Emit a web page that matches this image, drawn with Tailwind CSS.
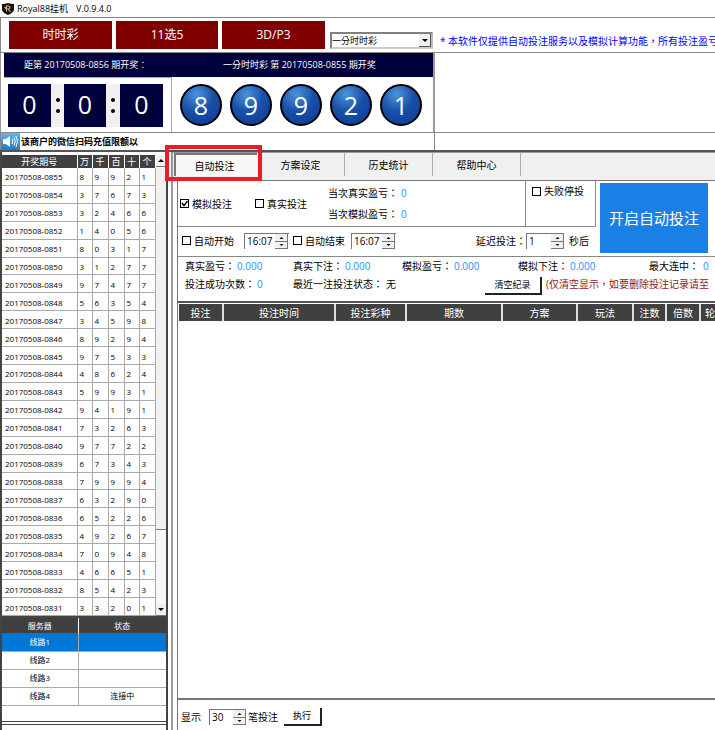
<!DOCTYPE html>
<html lang="zh-Hant">
<head>
<meta charset="utf-8">
<title>Royal88挂机 V.0.9.4.0</title>
<script src="https://cdn.jsdelivr.net/npm/@tailwindcss/browser@4"></script>
</head>
<body class="bg-white text-black font-['Open_Sans','Noto_Sans_CJK_TC',sans-serif] text-[10px] leading-[14px] overflow-hidden">
<div class="flex flex-col h-screen min-w-0 overflow-hidden whitespace-nowrap">
  <header class="flex items-center h-[17px] shrink-0 pl-[2px] gap-[3px]">
    <svg class="size-[12px]" viewBox="0 0 12 12"><path d="M0 1Q3 1 6 0Q9 1 12 1V7Q11 10 6 12Q1 10 0 7Z" fill="#15130f"/><path d="M4.500 8.500V3H6.500Q8 3.200 8 4.500Q8 6 6 6L8.500 9M2.500 4L4.500 6" fill="none" stroke="#d8b978" stroke-width="1.100"/></svg>
    <h1 class="flex gap-2 text-[9px]"><span>Royal88挂机</span><span>V.0.9.4.0</span></h1>
  </header>

  <div class="flex h-[36px] shrink-0 border-t border-l border-[#888] pl-2 pt-[3px] border-b">
    <nav class="flex gap-1 text-[12px] text-white">
      <button class="w-[103px] h-[28px] bg-[#800000]">时时彩</button>
      <button class="w-[102px] h-[28px] bg-[#800000]">11选5</button>
      <button class="w-[103px] h-[28px] bg-[#800000]">3D/P3</button>
    </nav>
    <div class="relative ml-[5px] mt-[11px] w-[103px] h-[17px] shrink-0 border-2 border-[#808080] border-r-[#bbb] border-b-[#ccc]">
      <select aria-label="彩种" class="block appearance-none w-full h-full text-[9px] leading-[12px] bg-white"><option>一分时时彩</option></select>
      <span class="absolute right-0 top-0 w-[12px] h-[13px] bg-[#f0f0f0] border-r border-b border-[#555] flex items-center justify-center pointer-events-none"><svg width="6" height="3"><path d="M0 0H6L3 3Z"/></svg></span>
    </div>
    <p class="ml-[7px] mt-[13px] text-[#0000ff] leading-[15px]">* 本软件仅提供自动投注服务以及模拟计算功能，所有投注盈亏</p>
  </div>

  <div class="flex h-[80px] shrink-0 border-b border-[#888]">
    <section class="w-[435px] shrink-0 border-l border-r-2 border-[#999] pl-[3px]">
      <div class="flex items-center h-[24px] bg-[#00003c] text-white text-[9px] pl-[20px]">
        <span class="w-[199px]">距第 20170508-0856 期开奖：</span><span>一分时时彩 第 20170508-0855 期开奖</span>
      </div>
      <div class="flex h-[55px]">
        <div class="flex items-center pl-1 pr-2 border-r border-t border-[#aaa] w-[168px] text-[25px] leading-[41px] text-white text-center">
          <span class="w-[43px] h-[43px] bg-[#00003c]">0</span>
          <span class="w-[13px] h-[43px] bg-[#f0f0f0] text-black flex flex-col items-center justify-center gap-[7px]"><i class="size-1 rounded-full bg-black"></i><i class="size-1 rounded-full bg-black"></i></span>
          <span class="w-[42px] h-[43px] bg-[#00003c]">0</span>
          <span class="w-[14px] h-[43px] bg-[#f0f0f0] text-black flex flex-col items-center justify-center gap-[7px]"><i class="size-1 rounded-full bg-black"></i><i class="size-1 rounded-full bg-black"></i></span>
          <span class="w-[43px] h-[43px] bg-[#00003c]">0</span>
        </div>
        <div class="flex flex-1 items-center gap-2 pl-2 text-[25px] leading-[38px] text-white text-center">
          <span class="size-[42px] rounded-full border-2 border-black bg-[radial-gradient(circle_at_38%_22%,#4a94dc,#1a50a8_45%,#0c3894)]">8</span>
          <span class="size-[42px] rounded-full border-2 border-black bg-[radial-gradient(circle_at_38%_22%,#4a94dc,#1a50a8_45%,#0c3894)]">9</span>
          <span class="size-[42px] rounded-full border-2 border-black bg-[radial-gradient(circle_at_38%_22%,#4a94dc,#1a50a8_45%,#0c3894)]">9</span>
          <span class="size-[42px] rounded-full border-2 border-black bg-[radial-gradient(circle_at_38%_22%,#4a94dc,#1a50a8_45%,#0c3894)]">2</span>
          <span class="size-[42px] rounded-full border-2 border-black bg-[radial-gradient(circle_at_38%_22%,#4a94dc,#1a50a8_45%,#0c3894)]">1</span>
        </div>
      </div>
    </section>
  </div>

  <div class="flex h-[17px] shrink-0">
    <div class="flex items-center w-[435px] border-r border-l border-[#888]">
      <svg class="w-[19px] h-[17px]" viewBox="0 0 19 17"><defs><linearGradient id="g" x2="0" y2="1"><stop stop-color="#64b5ec"/><stop offset="1" stop-color="#1f79c8"/></linearGradient></defs><rect width="19" height="17" fill="url(#g)"/><path d="M2 6H5L9 3V14L5 11H2Z" fill="#fff"/><path d="M11 6Q12.500 8.500 11 11M13 4.500Q15.500 8.500 13 12.500M15 3Q18 8.500 15 14" fill="none" stroke="#fff"/></svg>
      <span class="font-bold text-[9px] pl-px">该商户的微信扫码充值限额以</span>
    </div>
  </div>

  <div class="flex flex-1 min-h-0 border-t-2 border-[#555]">
    <aside class="flex flex-col w-[168px] shrink-0 border-l-2 border-r-2 border-[#444] text-[8px] leading-[12px]">
      <div class="flex pt-[3px] h-[465px] shrink-0 border-b border-[#444]">
        <table class="h-[461px] w-[153px] table-fixed border-collapse">
          <colgroup><col class="w-[75px]"><col class="w-[15px]"><col class="w-[16px]"><col class="w-[16px]"><col class="w-[15px]"><col class="w-[16px]"></colgroup>
          <thead><tr class="h-[13px] bg-[#404040] text-white text-[9px]"><th class="font-normal border-r border-white">开奖期号</th><th class="font-normal border-r border-white">万</th><th class="font-normal border-r border-white">千</th><th class="font-normal border-r border-white">百</th><th class="font-normal border-r border-white">十</th><th class="font-normal border-r border-white">个</th></tr></thead>
          <tbody id="draws"></tbody>
        </table>
        <div class="flex flex-col flex-1 bg-[#f7f7f7]">
          <button aria-label="上" class="h-[12px] flex items-center justify-center bg-[#f0f0f0] border-b border-[#777]"><svg width="6" height="3"><path d="M0 3H6L3 0Z"/></svg></button>
          <div class="h-[363px] bg-[#f0f0f0] border-b border-[#777]"></div>
          <button aria-label="下" class="mt-auto h-[12px] flex items-center justify-center bg-[#f0f0f0] border-b border-[#777]"><svg width="6" height="3"><path d="M0 0H6L3 3Z"/></svg></button>
        </div>
      </div>
      <div class="h-[105px] shrink-0 border-b border-t border-[#444]">
        <table class="w-full table-fixed border-collapse text-center">
          <colgroup><col class="w-[76px]"><col></colgroup>
          <thead><tr class="h-[15px] bg-[#404040] text-white"><th class="font-normal border-r border-white">服务器</th><th class="font-normal">状态</th></tr></thead>
          <tbody>
            <tr class="h-[18px] bg-[#0078d7] text-white"><td class="border-r border-b border-[#aaa]">线路1</td><td class="border-b border-[#aaa]"></td></tr>
            <tr class="h-[18px]"><td class="border-r border-b border-[#aaa]">线路2</td><td class="border-b border-[#aaa]"></td></tr>
            <tr class="h-[18px]"><td class="border-r border-b border-[#aaa]">线路3</td><td class="border-b border-[#aaa]"></td></tr>
            <tr class="h-[18px]"><td class="border-r border-b border-[#aaa]">线路4</td><td class="border-b border-[#aaa]">连接中</td></tr>
          </tbody>
        </table>
      </div>
      <div class="mt-[2px] flex-1 border-t border-[#444]"></div>
    </aside>

    <main class="flex flex-col flex-1 min-w-0 ml-[3px] border-l-2 border-t border-[#999]">
      <nav class="relative flex h-[27px] shrink-0 bg-[#f0f0f0] pl-px">
        <button class="w-[83px] h-[23px] pr-1 bg-[#f8f8f8] border-t-2 border-l-2 border-[#777]">自动投注</button>
        <button class="w-[88px] h-[23px] border-r border-[#aaa]">方案设定</button>
        <button class="w-[88px] h-[23px] border-r border-[#aaa]">历史统计</button>
        <button class="w-[88px] h-[23px] border-r border-[#aaa]">帮助中心</button>
        <span class="absolute -left-2 -top-2 w-[97px] h-[36px] border-4 border-[#ed1c24] pointer-events-none"></span>
      </nav>
      <div class="flex flex-col flex-1 ml-[4px] border-l border-t border-[#777]">
        <div class="flex h-[76px] shrink-0 border-b border-[#888]">
          <div class="w-[418px] shrink-0">
            <div class="flex h-[46px] border-b border-r border-[#888]">
              <div class="flex items-center w-[348px] border-r border-[#888] pl-[2px]">
                <label class="flex items-center gap-[3px] w-[75px]"><span class="relative size-[9px]"><input type="checkbox" checked class="peer block appearance-none size-[9px] border border-black bg-white"><svg class="absolute inset-0 pointer-events-none hidden peer-checked:block" width="9" height="9"><path d="M2 4L4 6.500L7.500 2" fill="none" stroke="#000" stroke-width="1.400"/></svg></span>模拟投注</label>
                <label class="flex items-center gap-[3px] w-[73px]"><input type="checkbox" class="appearance-none size-[9px] border border-black">真实投注</label>
                <dl class="grid grid-cols-[73px_auto] gap-y-[7px]"><dt>当次真实盈亏：</dt><dd class="text-[#1e90ff]">0</dd><dt>当次模拟盈亏：</dt><dd class="text-[#1e90ff]">0</dd></dl>
              </div>
              <label class="flex items-center gap-[3px] h-[20px] pl-[6px]"><input type="checkbox" class="appearance-none size-[9px] border border-black">失败停投</label>
            </div>
            <div class="flex items-center h-[27px] pl-[4px]">
              <label class="flex items-center gap-[3px] w-[62px]"><input type="checkbox" class="appearance-none size-[9px] border border-black">自动开始</label>
              <div class="flex w-[45px] h-[16px] border-t border-l border-[#777]"><input aria-label="开始时间" value="16:07" class="w-[30px] pl-[2px]"><svg class="bg-[#f0f0f0]" width="13" height="15"><path d="M0 7.500H13M12.500 0V15M0 14.500H13" stroke="#777"/><path d="M4.500 5H8.500L6.500 3ZM4.500 10H8.500L6.500 12Z"/></svg></div>
              <label class="flex items-center gap-[3px] w-[58px] ml-[4px]"><input type="checkbox" class="appearance-none size-[9px] border border-black">自动结束</label>
              <div class="flex w-[45px] h-[16px] border-t border-l border-[#777]"><input aria-label="结束时间" value="16:07" class="w-[30px] pl-[2px]"><svg class="bg-[#f0f0f0]" width="13" height="15"><path d="M0 7.500H13M12.500 0V15M0 14.500H13" stroke="#777"/><path d="M4.500 5H8.500L6.500 3ZM4.500 10H8.500L6.500 12Z"/></svg></div>
              <label for="delay" class="ml-[80px] w-[50px]">延迟投注：</label>
              <div class="flex w-[38px] h-[16px] border-t border-l border-[#777]"><input id="delay" value="1" class="w-[24px] pl-[2px]"><svg class="bg-[#f0f0f0]" width="13" height="15"><path d="M0 7.500H13M12.500 0V15M0 14.500H13" stroke="#777"/><path d="M4.500 5H8.500L6.500 3ZM4.500 10H8.500L6.500 12Z"/></svg></div>
              <span class="ml-[5px]">秒后</span>
            </div>
          </div>
          <button class="ml-[4px] mt-[2px] w-[108px] h-[70px] shrink-0 bg-[#1b80e6] text-white text-[15px]">开启自动投注</button>
        </div>
        <div class="h-[44px] shrink-0 pl-[7px] pt-[2px]">
          <div class="flex h-[18px]">
            <span class="w-[52px]">真实盈亏：</span><b class="w-[56px] font-normal text-[#1e90ff]">0.000</b>
            <span class="w-[52px]">真实下注：</span><b class="w-[57px] font-normal text-[#1e90ff]">0.000</b>
            <span class="w-[52px]">模拟盈亏：</span><b class="w-[64px] font-normal text-[#1e90ff]">0.000</b>
            <span class="w-[52px]">模拟下注：</span><b class="w-[79px] font-normal text-[#1e90ff]">0.000</b>
            <span class="w-[54px]">最大连中：</span><b class="font-normal text-[#1e90ff]">0</b>
          </div>
          <div class="flex">
            <span class="w-[72px]">投注成功次数：</span><b class="w-[36px] font-normal text-[#1e90ff]">0</b>
            <span class="w-[93px]">最近一注投注状态：</span><span class="w-[99px]">无</span>
            <button class="w-[57px] h-[18px] border-r-2 border-b-2 border-[#222] text-[9px]">清空纪录</button>
            <span class="ml-[4px] text-[#8b1a1a]">(仅清空显示，如要删除投注记录请至</span>
          </div>
        </div>
        <div class="flex-1 border-t-2 border-[#555] pt-px pl-px overflow-hidden">
          <table class="table-fixed border-collapse w-[580px]">
            <colgroup><col class="w-[44px]"><col class="w-[112px]"><col class="w-[71px]"><col class="w-[96px]"><col class="w-[75px]"><col class="w-[56px]"><col class="w-[33px]"><col class="w-[34px]"><col></colgroup>
            <thead><tr class="h-[17px] bg-[#404040] text-white leading-[12px]"><th class="font-normal border-r-2 border-[#ddd]">投注</th><th class="font-normal border-r-2 border-[#ddd]">投注时间</th><th class="font-normal border-r-2 border-[#ddd]">投注彩种</th><th class="font-normal border-r-2 border-[#ddd]">期数</th><th class="font-normal border-r-2 border-[#ddd]">方案</th><th class="font-normal border-r-2 border-[#ddd]">玩法</th><th class="font-normal border-r-2 border-[#ddd]">注数</th><th class="font-normal border-r-2 border-[#ddd]">倍数</th><th class="font-normal text-left pl-1">轮</th></tr></thead>
            <tbody></tbody>
          </table>
        </div>
        <footer class="flex items-center h-[32px] shrink-0 border-t-2 border-[#777] pl-[3px] pt-[3px]">
          <label for="count" class="w-[28px]">显示</label>
          <div class="flex w-[37px] h-[16px] border-t border-l border-[#777]"><input id="count" value="30" class="w-[23px] pl-[2px]"><svg class="bg-[#f0f0f0]" width="13" height="15"><path d="M0 7.500H13M12.500 0V15M0 14.500H13" stroke="#777"/><path d="M4.500 5H8.500L6.500 3ZM4.500 10H8.500L6.500 12Z"/></svg></div>
          <span class="ml-[2px]">笔投注</span>
          <button class="ml-[6px] w-[38px] h-[18px] border-r-2 border-b-2 border-[#222] text-[9px]">执行</button>
        </footer>
      </div>
    </main>
  </div>
</div>
<script>
const draws = ["89921","37673","32466","14056","80317","31277","97477","56354","34598","89294","97533","48624","59931","94191","73263","97722","67343","79994","63290","65226","49267","70948","46651","85423","33201"];
document.getElementById("draws").innerHTML = draws.map((d, i) =>
  `<tr><td class="border-r border-b border-[#aaa] pl-[3px] pt-[2px]">20170508-0${855 - i}</td>` +
  [...d].map(n => `<td class="border-r border-b border-[#aaa] pl-[2px] pt-[2px]">${n}</td>`).join("") + "</tr>").join("");
</script>
</body>
</html>
